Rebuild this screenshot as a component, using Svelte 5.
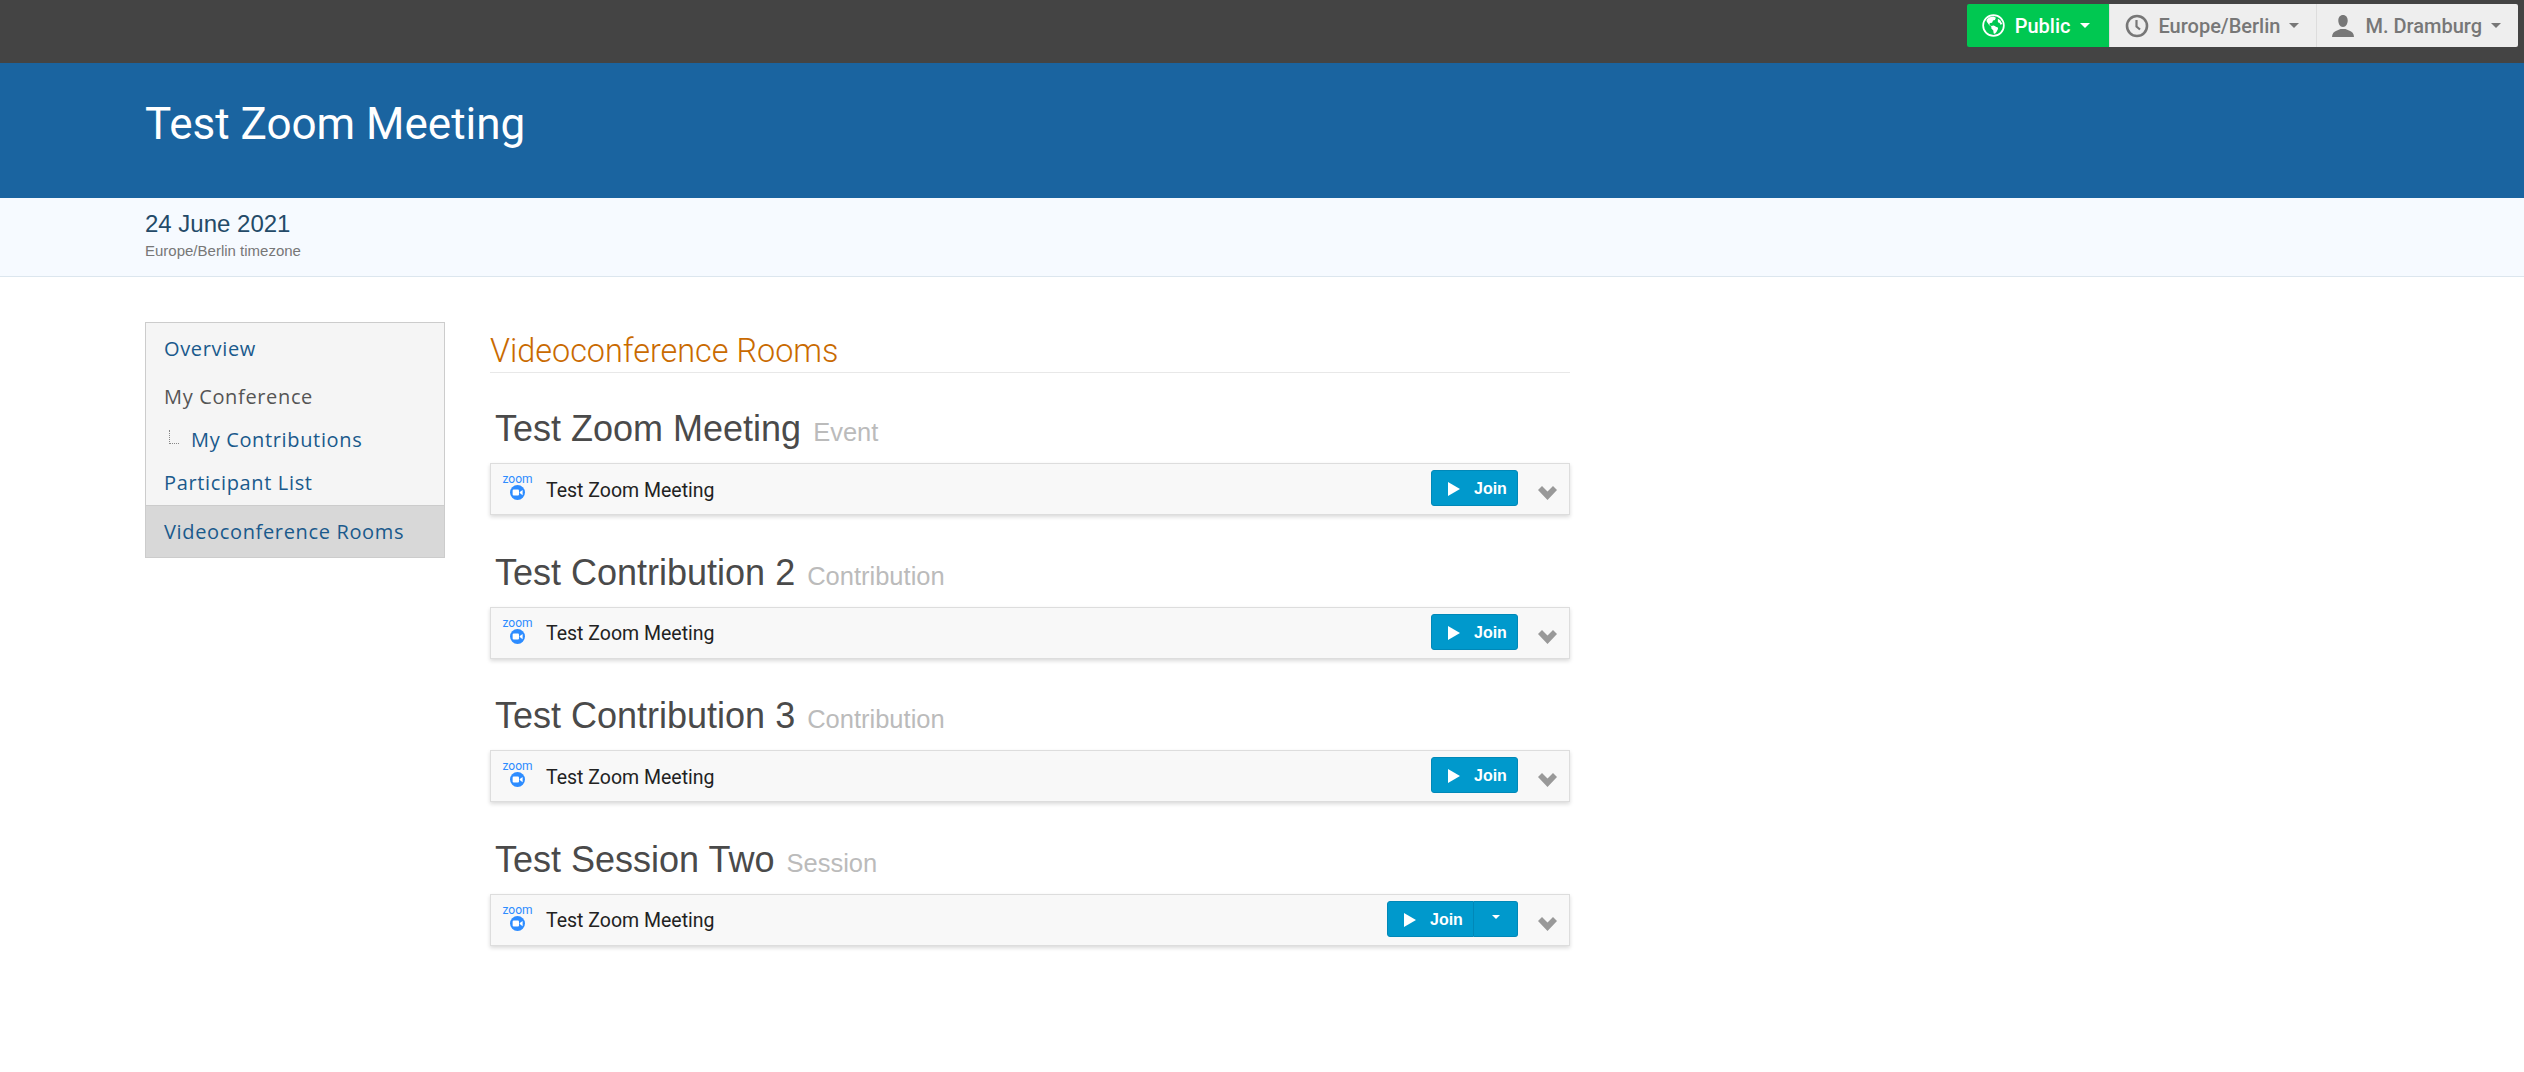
<script>
  const rooms = [
    { title: 'Test Zoom Meeting', kind: 'Event' },
    { title: 'Test Contribution 2', kind: 'Contribution' },
    { title: 'Test Contribution 3', kind: 'Contribution' },
    { title: 'Test Session Two', kind: 'Session', split: true }
  ]
</script>

<div class="page">
  <div class="topbar">
    <div class="toolbar">
      <button class="tool public">
        <svg class="tool-icon" viewBox="0 0 24 24" width="23" height="23">
          <circle cx="12" cy="12" r="10.800" fill="none" stroke="#fff" stroke-width="1.800" />
          <path fill="#fff" d="M8 3.500l4-1 2.500 1.500-1 2.200-2 .6-1 2.200-2.200.3-.6 1.700 1.600 1.500 3-.6 2.700 1.600 1.300.2.500 1.700-1.700 3.300-1.600 2-1.300-.4-.5-3.300-1.800-1.700-.3-2.200-2.200-1.500-2-3C3.800 7 5.500 4.700 8 3.500zM16.500 5l2.500 1.500 2.200 4-2 .6-.8-1.800-1.800-.8z" />
        </svg>
        <span>Public</span>
        <i class="caret"></i>
      </button>
      <button class="tool">
        <svg class="tool-icon" viewBox="0 0 24 24" width="24" height="24" fill="none" stroke="#777" stroke-width="2.600">
          <circle cx="12" cy="12" r="10" />
          <path d="M11.500 6v6.500l3.500 3" stroke-width="2.200" />
        </svg>
        <span>Europe/Berlin</span>
        <i class="caret"></i>
      </button>
      <button class="tool">
        <svg class="tool-icon" viewBox="0 0 24 24" width="26" height="24" fill="#777">
          <path d="M12 1c3 0 4.700 2.400 4.700 5.500S15 13 12 13 7.300 9.600 7.300 6.500 9 1 12 1zM1 23c0-3.500 2-5.500 5-6.500l3.500-1.500h5l3.500 1.500c3 1 5 3 5 6.500z" />
        </svg>
        <span>M. Dramburg</span>
        <i class="caret"></i>
      </button>
    </div>
  </div>

  <header class="banner">
    <h1>Test Zoom Meeting</h1>
  </header>

  <div class="subheader">
    <div class="date">24 June 2021</div>
    <div class="tz">Europe/Berlin timezone</div>
  </div>

  <main class="main">
    <nav class="menu">
      <a class="item first" href="#overview">Overview</a>
      <div class="item group">My Conference</div>
      <a class="item sub" href="#contributions">My Contributions</a>
      <a class="item last" href="#participants">Participant List</a>
      <a class="item active" href="#rooms">Videoconference Rooms</a>
    </nav>

    <section class="content">
      <h2>Videoconference Rooms</h2>
      {#each rooms as room}
        <div class="room">
          <h3>{room.title} <small>{room.kind}</small></h3>
          <div class="card">
            <div class="logo">
              <span class="zoom-word">zoom</span>
              <svg viewBox="0 0 20 20" width="15" height="15">
                <circle cx="10" cy="10" r="10" fill="#2d8cff" />
                <rect x="3.500" y="6" width="8.500" height="8" rx="1.500" fill="#fff" />
                <path d="M13 9.200l3.800-2.700v7L13 10.800z" fill="#fff" />
              </svg>
            </div>
            <span class="name">Test Zoom Meeting</span>
            <div class="btn-group">
              <button class="join">
                <svg viewBox="0 0 12 14" width="12" height="14"><path d="M0 0l12 7-12 7z" fill="#fff" /></svg>
                <span>Join</span>
              </button>
              {#if room.split}
                <button class="more"><i class="caret"></i></button>
              {/if}
            </div>
            <svg class="chevron" viewBox="0 0 19 14" width="19" height="14">
              <path d="M0 4l4-4 5.500 5.500L15 0l4 4-9.500 10z" fill="#999" />
            </svg>
          </div>
        </div>
      {/each}
    </section>
  </main>
</div>

<style>
  :global(body) {
    margin: 0;
    background: #fff;
  }

  .page {
    min-height: 1072px;
    font-family: 'Liberation Sans', Arial, sans-serif;
  }

  .topbar {
    height: 63px;
    background: #444;
    display: flex;
    justify-content: flex-end;
    align-items: flex-start;
    padding: 4px 6px 0 0;
    box-sizing: border-box;
  }

  .toolbar {
    display: flex;
    height: 43px;
    border-radius: 2px;
    overflow: hidden;
  }

  .tool {
    display: flex;
    align-items: center;
    gap: 9px;
    padding: 0 17px 0 15px;
    border: 0;
    border-right: 1px solid #ddd;
    background: #eee;
    color: #777;
    font: 500 20px Roboto, sans-serif;
  }

  .tool:last-child {
    border-right: 0;
    padding-left: 13px;
  }

  .tool.public {
    background: #00c851;
    color: #fff;
    padding: 0 19px 0 15px;
    gap: 10px;
  }

  .tool-icon {
    flex: none;
  }

  .caret {
    display: inline-block;
    width: 0;
    height: 0;
    border-left: 5px solid transparent;
    border-right: 5px solid transparent;
    border-top: 5px solid currentColor;
  }

  .banner {
    height: 135px;
    background: #1a64a0;
    padding: 0 145px;
    display: flex;
    align-items: center;
  }

  h1 {
    margin: 0 0 14px;
    color: #fff;
    font: 400 44px Roboto, sans-serif;
  }

  .subheader {
    height: 79px;
    box-sizing: border-box;
    padding: 11px 145px 0;
    background: #f6faff;
    border-bottom: 1px solid #dce6ee;
  }

  .date {
    font-size: 24px;
    line-height: 30px;
    color: #244a68;
  }

  .tz {
    font-size: 15px;
    line-height: 22px;
    margin-top: 1px;
    color: #777;
  }

  .main {
    display: flex;
    align-items: flex-start;
    padding: 45px 145px 0;
    gap: 45px;
  }

  .menu {
    width: 300px;
    flex: none;
    box-sizing: border-box;
    border: 1px solid #ccc;
    background: #f5f5f5;
    display: flex;
    flex-direction: column;
    font: 20px 'Open Sans', sans-serif;
    letter-spacing: 0.65px;
  }

  .item {
    display: block;
    padding: 0 18px;
    line-height: 43px;
    color: #1a5a8c;
    text-decoration: none;
  }

  .item.first {
    line-height: 52px;
  }

  .item.group {
    color: #555;
  }

  .item.last {
    line-height: 44px;
  }

  .item.sub {
    padding-left: 45px;
    position: relative;
  }

  .item.sub::before {
    content: '';
    position: absolute;
    left: 23px;
    top: 12px;
    width: 9px;
    height: 13px;
    border-left: 1px dotted #888;
    border-bottom: 1px dotted #888;
  }

  .item.active {
    background: #d8d8d8;
    border-top: 1px solid #ccc;
    line-height: 51px;
  }

  .content {
    width: 1080px;
  }

  h2 {
    margin: 9px 0 0;
    padding-bottom: 1px;
    color: #c96a00;
    font: 300 32.400px/40px Roboto, sans-serif;
    border-bottom: 1px solid #e8e8e8;
  }

  .room {
    margin-top: 34px;
    height: 109.500px;
  }

  h3 {
    margin: 0 0 9px;
    padding-left: 5px;
    color: #4a4a4a;
    font: 400 36px/44px 'Liberation Sans', sans-serif;
  }

  h3 small {
    margin-left: 2px;
    font-size: 25.500px;
    color: #bbb;
  }

  .card {
    display: flex;
    align-items: center;
    height: 52px;
    box-sizing: border-box;
    background: #f8f8f8;
    border: 1px solid #ddd;
    box-shadow: 0 2px 4px rgba(0, 0, 0, 0.15);
    padding: 0 10px;
  }

  .logo {
    width: 33px;
    display: flex;
    flex-direction: column;
    align-items: center;
    margin: 0 12px 4px 0;
  }

  .zoom-word {
    color: #2d8cff;
    font: 400 12px/10px Roboto, sans-serif;
  }

  .logo svg {
    margin-top: 1px;
  }

  .name {
    margin-top: 2px;
    font: 19.500px Roboto, sans-serif;
    color: #222;
  }

  .btn-group {
    margin: 0 0 2px auto;
    display: flex;
    height: 36px;
  }

  .join,
  .more {
    display: flex;
    align-items: center;
    border: 1px solid #0088b8;
    background: #0099cc;
    color: #fff;
    font: 700 16px 'Liberation Sans', sans-serif;
  }

  .join {
    width: 87px;
    gap: 14px;
    padding: 2px 0 0 16px;
    border-radius: 3px;
  }

  .join svg {
    flex: none;
  }

  .more {
    width: 44px;
    justify-content: center;
    border-left-color: #0080ad;
    border-left-width: 0;
    border-radius: 0 3px 3px 0;
  }

  .more .caret {
    border-left-width: 4px;
    border-right-width: 4px;
    border-top-width: 4px;
    margin-bottom: 4px;
  }

  .btn-group:has(.more) .join {
    border-radius: 3px 0 0 3px;
  }

  .chevron {
    margin: 8px 2px 0 20px;
  }
</style>
